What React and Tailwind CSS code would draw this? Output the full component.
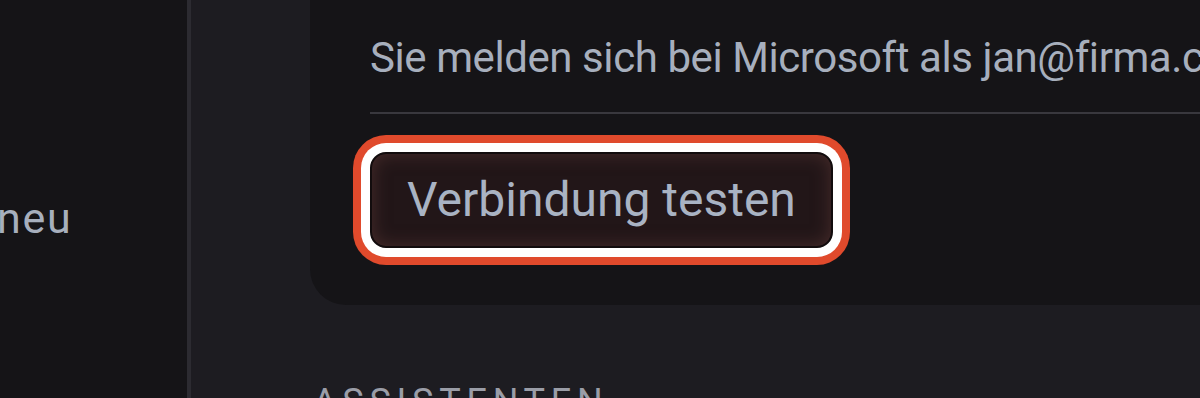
import React from 'react'

const App = () => {
  return (
    <div className="flex h-[398px] w-[1200px] overflow-hidden bg-[#1d1c21] font-['Roboto',sans-serif] antialiased">
      {/* sidebar */}
      <aside className="w-[191px] shrink-0 border-r-4 border-[#2c2b31] bg-[#151417]">
        <div className="ml-[-3px] mt-[188px] text-[43px] leading-[60px] tracking-[0.04em] text-[#a7afbd] whitespace-nowrap">
          neu
        </div>
      </aside>

      {/* main */}
      <main className="min-w-0 flex-1 pl-[119px]">
        <section className="rounded-bl-[36px] bg-[#151417] pl-[60px] pt-[28px] pb-[57px]">
          <p className="text-[42px] leading-[60px] tracking-[-0.01em] text-[#a7afbd] whitespace-nowrap">
            Sie melden sich bei Microsoft als jan@firma.com
          </p>
          <div className="mt-[24px] h-[2px] bg-[#39383e]" />
          <button
            type="button"
            className="mt-[38px] flex h-[96px] items-center rounded-[16px] border-2 border-[#120c0d] bg-[#221618] px-[35px] text-[48px] leading-none text-[#a9b3c3] whitespace-nowrap shadow-[inset_0_0_18px_rgba(110,65,62,0.5)] ring-[8px] ring-[#e04a2c] ring-offset-[9px] ring-offset-white"
          >
            Verbindung testen
          </button>
        </section>

        <h2 className="ml-[3px] mt-[79px] text-[36px] leading-[36px] tracking-[0.16em] text-[#9a9da7] whitespace-nowrap">
          ASSISTENTEN
        </h2>
      </main>
    </div>
  )
}

export default App
